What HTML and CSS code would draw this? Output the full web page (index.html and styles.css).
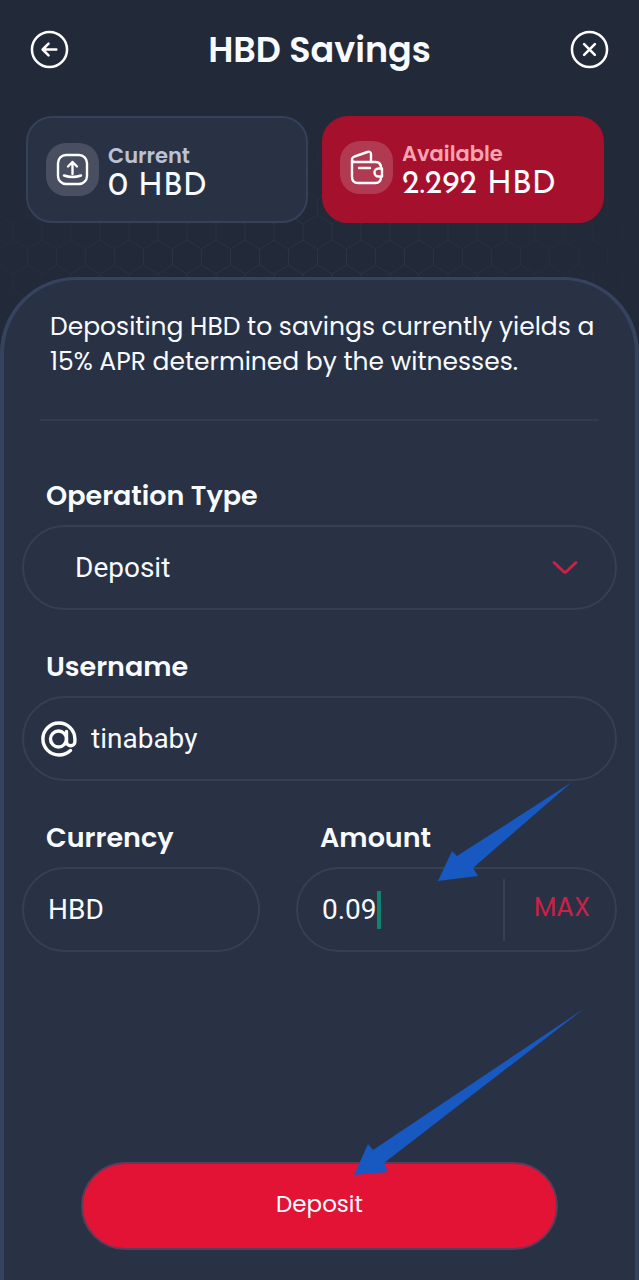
FILE: index.html
```html
<!DOCTYPE html>
<html lang="en">
<head>
<meta charset="utf-8">
<meta name="viewport" content="width=device-width, initial-scale=1">
<title>HBD Savings</title>
<link rel="stylesheet" href="styles.css">
</head>
<body>
<div class="top">
  <svg class="honeycomb" aria-hidden="true">
    <defs>
      <pattern id="hex" width="29" height="50" patternUnits="userSpaceOnUse" patternTransform="translate(13 7)">
        <path d="M14.5 0v8L0 17v16l14.5 9v8M14.5 8L29 17v16l-14.5 9" fill="none" stroke="#3a465c" stroke-width="1"/>
      </pattern>
    </defs>
    <rect width="100%" height="100%" fill="url(#hex)"/>
  </svg>
  <header class="header">
    <button class="round-button" type="button" aria-label="Back">
      <svg viewBox="0 0 40 40"><circle cx="20" cy="20" r="18"/><path d="M27 20H13.500M19 14l-6 6 6 6"/></svg>
    </button>
    <h1 class="title">HBD Savings</h1>
    <button class="round-button" type="button" aria-label="Close">
      <svg viewBox="0 0 40 40"><circle cx="20" cy="20" r="18"/><path d="M14.500 14.500l11 11M25.500 14.500l-11 11"/></svg>
    </button>
  </header>
  <div class="cards">
    <div class="card">
      <div class="tile">
        <svg viewBox="0 0 53 53"><rect x="12" y="12" width="29" height="29" rx="8"/><path d="M26.500 31V19M22 23.500l4.500-4.500 4.500 4.500M18 32.500q8.500 3 17 0"/></svg>
      </div>
      <div class="balance"><span class="balance-label">Current</span><span class="balance-value">0 HBD</span></div>
    </div>
    <div class="card card-available">
      <div class="tile">
        <svg viewBox="0 0 53 53"><path d="M12 19v17q0 6 6 6h17.500q5.500 0 5.500-6M41 27q0-6-5.500-6H15q-3 0-3-2.500 0-2 2.500-3l13-4.500q3.500-1 3.500 2.500V21M19 27h11"/><path d="M42 27.500h-3.500a4 4 0 0 0 0 8H42z"/></svg>
      </div>
      <div class="balance"><span class="balance-label">Available</span><span class="balance-value">2.292 HBD</span></div>
    </div>
  </div>
</div>
<main class="panel">
  <p class="intro">Depositing HBD to savings currently yields a 15% APR determined by the witnesses.</p>
  <form class="form">
    <div class="group">
      <label class="label" for="operation">Operation Type</label>
      <div class="field field-select">
        <select class="control" id="operation"><option>Deposit</option><option>Withdraw</option></select>
        <svg class="chevron" viewBox="0 0 28 16" aria-hidden="true"><path d="M3 2.500l9.500 9q1.500 1.500 3 0l9.500-9"/></svg>
      </div>
    </div>
    <div class="group">
      <label class="label" for="username">Username</label>
      <div class="field field-user">
        <svg class="at" viewBox="0 0 36 36" aria-hidden="true"><circle cx="17.500" cy="18" r="8"/><path d="M25.500 10.500v10a4.200 4.200 0 0 0 8.400 0V18A16 16 0 1 0 18 34q6.500 0 11.500-4.500"/></svg>
        <input class="control" id="username" type="text" value="tinababy">
      </div>
    </div>
    <div class="row">
      <div class="group">
        <label class="label" for="currency">Currency</label>
        <div class="field"><input class="control" id="currency" type="text" value="HBD"></div>
      </div>
      <div class="group">
        <label class="label" for="amount">Amount</label>
        <div class="field field-amount">
          <div class="entry"><input class="control control-amount" id="amount" type="text" inputmode="decimal" value="0.09"><span class="caret"></span></div>
          <button class="max" type="button">MAX</button>
        </div>
        <svg class="pointer pointer-amount" viewBox="0 0 134 100" aria-hidden="true"><path d="M134 0L35 86l5 8-40 5 14-30 5 5z"/></svg>
      </div>
    </div>
    <div class="actions">
      <button class="submit" type="submit">Deposit</button>
      <svg class="pointer pointer-submit" viewBox="0 0 231 167" aria-hidden="true"><path d="M231 0L30 155l4 9-34 3 14-31 5 6z"/></svg>
    </div>
  </form>
</main>
</body>
</html>
```
FILE: styles.css
```css
* { box-sizing: border-box; }

body {
  margin: 0;
  min-height: 100vh;
  display: flex;
  flex-direction: column;
  background: #222938;
  color: #f8fbff;
  font-family: Poppins, Inter, sans-serif;
}

button, input, select { font: inherit; color: inherit; }
button { border: 0; padding: 0; background: none; cursor: pointer; }
svg { display: block; }

.top {
  position: relative;
  padding: 0 26px 54px;
}

.honeycomb {
  position: absolute;
  inset: 0 0 -80px;
  width: 100%;
  height: calc(100% + 80px);
  opacity: 0.4;
  mask-image: radial-gradient(ellipse 75% 45% at 45% 75%, #000 10%, transparent 100%);
}

.header {
  position: relative;
  display: flex;
  align-items: center;
  justify-content: space-between;
  height: 99px;
  padding: 0 4px;
}

.round-button { width: 39px; height: 39px; }
.round-button svg, .tile svg {
  width: 100%;
  fill: none;
  stroke: #fff;
  stroke-width: 2.6;
  stroke-linecap: round;
  stroke-linejoin: round;
}

.title {
  margin: 0;
  font-size: 35px;
  line-height: 48px;
  font-weight: 600;
}

.cards {
  position: relative;
  display: grid;
  grid-template-columns: 1fr 1fr;
  gap: 14px;
  padding: 17px 9px 0 0;
}

.card {
  display: flex;
  align-items: center;
  gap: 9px;
  height: 107px;
  padding: 0 18px;
  border: 2px solid #344158;
  border-radius: 26px;
  background: #293245;
}

.card-available {
  padding: 0 16px 4px;
  border-color: #a5112c;
  background: #a5112c;
}

.tile {
  flex: none;
  width: 53px;
  height: 53px;
  border-radius: 20px;
  background: #494f60;
}
.card-available .tile { background: #b13951; }
.tile svg { stroke-width: 2.4; }

.balance {
  display: flex;
  flex-direction: column;
  padding-top: 6px;
  white-space: nowrap;
}
.balance-label {
  font-size: 21px;
  line-height: 28px;
  font-weight: 600;
  color: #bbc1d7;
}
.card-available .balance-label { color: #f6a4b2; }
.balance-value {
  font-family: "Josefin Sans", Lato, sans-serif;
  font-size: 32px;
  line-height: 34px;
}

.panel {
  position: relative;
  flex: 1;
  display: flex;
  flex-direction: column;
  padding: 29px 18px 30px;
  border: 4px solid #36435f;
  border-width: 3px 4px 0;
  border-radius: 76px 76px 0 0;
  background: #293144;
}

.intro {
  margin: 0 18px;
  padding: 0 0 40px 10px;
  border-bottom: 2px solid #303b4e;
  font-size: 25px;
  line-height: 35px;
}

.form {
  flex: 1;
  display: flex;
  flex-direction: column;
  gap: 41px;
  padding-top: 59px;
}

.group {
  position: relative;
  display: flex;
  flex-direction: column;
  gap: 13px;
}

.label {
  padding-left: 24px;
  font-size: 27px;
  line-height: 32px;
  font-weight: 600;
}

.field {
  display: flex;
  align-items: center;
  height: 85px;
  padding: 0 24px;
  border: 2px solid #344056;
  border-radius: 43px;
  font-family: Roboto, sans-serif;
  font-size: 28px;
}

.control {
  flex: 1;
  min-width: 0;
  width: 100%;
  height: 60px;
  padding: 0;
  border: 0;
  outline: 0;
  background: none;
  appearance: none;
}

.field-select { padding: 0 36px 0 51px; }
.chevron {
  width: 28px;
  fill: none;
  stroke: #cb2148;
  stroke-width: 3;
  stroke-linecap: round;
}

.field-user { gap: 14px; padding-left: 17px; }
.at {
  flex: none;
  width: 36px;
  fill: none;
  stroke: #fff;
  stroke-width: 3.4;
  stroke-linecap: round;
}

.row {
  display: grid;
  grid-template-columns: 238fr 321fr;
  gap: 36px;
}

.field-amount { padding-right: 0; }
.entry { flex: 1; display: flex; align-items: center; }
.control-amount { flex: none; width: 55px; field-sizing: content; }
.caret { width: 4px; height: 38px; background: #11836f; }

.max {
  width: 112px;
  height: 62px;
  padding: 0 0 4px 4px;
  border-left: 2px solid #344056;
  font-family: Poppins, Inter, sans-serif;
  font-size: 26px;
  color: #cb2148;
}

.pointer { position: absolute; fill: #1858c1; pointer-events: none; }
.pointer-amount { width: 134px; left: 142px; top: -40px; }

.actions {
  position: relative;
  margin: auto 59px 0;
}
.submit {
  width: 100%;
  height: 88px;
  padding-bottom: 4px;
  border: 2px solid #5b3c59;
  border-radius: 44px;
  background: #e31335;
  font-size: 23px;
}
.pointer-submit { width: 231px; right: -27px; bottom: 75px; }
```
